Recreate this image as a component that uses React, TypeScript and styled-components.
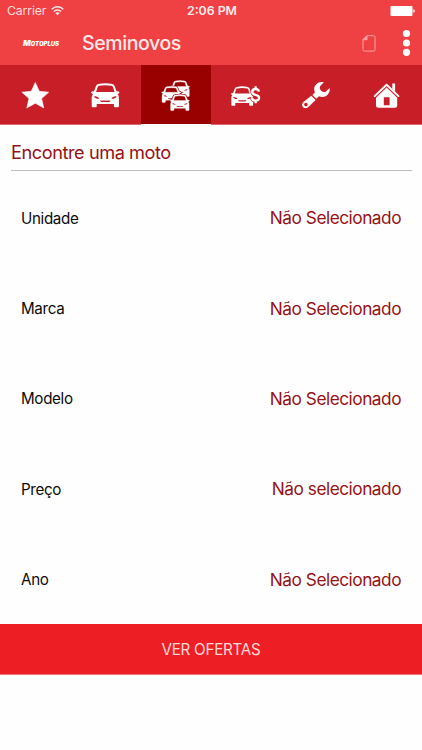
import React from "react";
import styled, { createGlobalStyle } from "styled-components";

const GlobalStyle = createGlobalStyle`
  * { box-sizing: border-box; }
  body { margin: 0; background: #fff; font-family: Inter, "Liberation Sans", sans-serif; }
`;

const Screen = styled.div`
  width: 422px;
  height: 750px;
  background: #fefefe;
  display: flex;
  flex-direction: column;
  overflow: hidden;
`;

const Header = styled.header`
  height: 65px;
  flex: none;
  background: #ef4143;
  color: #fff;
`;

const StatusBar = styled.div`
  height: 22px;
  padding: 0 7px 0 7px;
  display: grid;
  grid-template-columns: 1fr auto 1fr;
  align-items: center;
  font-size: 12.3px;
  line-height: 22px;
`;

const Carrier = styled.div`
  display: flex;
  align-items: center;
  gap: 5px;
  color: #ffdcdc;
  letter-spacing: -0.15px;
`;

const Clock = styled.div`
  font-weight: 600;
  font-size: 12.3px;
  letter-spacing: 0;
  color: #ffeaea;
  padding-left: 2px;
`;

const BatterySlot = styled.div`
  display: flex;
  justify-content: flex-end;
`;

const NavBar = styled.div`
  height: 43px;
  padding: 0 11.5px 1px 23px;
  display: flex;
  align-items: center;
`;

const Logo = styled.div`
  width: 59px;
  font-size: 6px;
  line-height: 8px;
  font-weight: 900;
  font-style: italic;
  letter-spacing: -0.05px;
  white-space: nowrap;
`;

const LogoInitial = styled.span`
  font-size: 8px;
`;

const Title = styled.h1`
  flex: 1;
  margin: 0;
  font-size: 19.5px;
  line-height: 24px;
  font-weight: 500;
  letter-spacing: -0.4px;
  color: #ffe9e9;
`;

const PageIcon = styled.svg`
  margin-right: 26px;
`;

const Tabs = styled.nav`
  height: 60px;
  flex: none;
  display: grid;
  grid-template-columns: repeat(6, 1fr);
  background: #fff;
`;

const Tab = styled.div<{ $active?: boolean }>`
  height: ${(p) => (p.$active ? 58.5 : 60)}px;
  overflow: hidden;
  background: ${(p) => (p.$active ? "#990000" : "#c81e27")};
  border-bottom: ${(p) => (p.$active ? "none" : "1px solid #db6a70")};
  svg { display: block; width: 100%; height: 60px; }
`;

const Heading = styled.h2`
  margin: 0 10px 0 11px;
  height: 46px;
  flex: none;
  padding-top: 15px;
  border-bottom: 1px solid #bdbdbd;
  font-size: 18.2px;
  line-height: 25px;
  font-weight: 400;
  letter-spacing: -0.45px;
  color: #951216;
`;

const Filters = styled.div`
  flex: none;
  height: 453px;
  padding: 2px 21px 0 21px;
`;

const Row = styled.div`
  height: 90.4px;
  display: flex;
  justify-content: space-between;
  align-items: center;
`;

const Label = styled.span`
  font-size: 15.2px;
  line-height: 20px;
  letter-spacing: -0.35px;
  padding-top: 1px;
  color: #0c0c0c;
`;

const Value = styled.span`
  font-size: 17.3px;
  line-height: 22px;
  letter-spacing: -0.5px;
  color: #951216;
`;

const OffersButton = styled.button`
  flex: none;
  width: 100%;
  height: 51px;
  padding: 1px 0 0;
  border: 0;
  border-bottom: 1px solid #f37b7d;
  background: #ee1f24;
  color: #ffdada;
  letter-spacing: -0.25px;
  font: 400 15.2px/49px Inter, "Liberation Sans", sans-serif;
`;

/* Front view of a car on a 28 x 24 grid. */
const Car = () => (
  <path
    fillRule="evenodd"
    d="M7 .8Q14-.9 21 .8Q22.8 1.3 23.5 3.2L25.3 8.2Q28 8 28.2 9.3Q28 10.4 26.2 10.7Q27.6 12 27.6 14V23Q27.6 24 26.6 24H23.6Q22.6 24 22.6 23V20.7H5.4V23Q5.4 24 4.4 24H1.4Q.4 24 .4 23V14Q.4 12 1.8 10.7Q0 10.4-.2 9.3Q0 8 2.7 8.2L4.5 3.2Q5.2 1.3 7 .8ZM7.6 2.6Q6.7 2.8 6.3 4L4.8 8.9H23.2L21.7 4Q21.3 2.8 20.4 2.6Q14 1.4 7.6 2.6ZM2.8 12.8Q3 15.6 7.8 15.6Q7.8 13.6 2.8 12.8ZM25.2 12.8Q25 15.6 20.2 15.6Q20.2 13.6 25.2 12.8ZM8.8 17.3L9.7 18.8H18.3L19.2 17.3Z"
  />
);

/* Solid outline used to separate overlapping cars. */
const carOutline =
  "M7 .8Q14-.9 21 .8Q22.8 1.3 23.5 3.2L25.3 8.2Q28 8 28.2 9.3Q28 10.4 27.6 14V24H.4V14Q0 10.4-.2 9.3Q0 8 2.7 8.2L4.5 3.2Q5.2 1.3 7 .8Z";

const FleetCar = ({ x, y }: { x: number; y: number }) => (
  <g transform={`translate(${x} ${y}) scale(.68 .67)`}>
    <path d={carOutline} fill="#990000" stroke="#990000" strokeWidth="2.4" />
    <g stroke="#fff" strokeWidth=".5"><Car /></g>
  </g>
);

const dollar =
  "M48 26.6C47.6 24.7 46.2 24 44.6 24C42.6 24 41.2 25.2 41.2 26.9C41.2 28.8 42.6 29.4 44.6 29.8C46.8 30.3 48.1 31 48.1 32.8C48.1 34.6 46.6 35.6 44.6 35.6C42.5 35.6 41.1 34.6 40.8 32.8M44.6 21.2V24.2M44.6 35.4V38.2";

const tabs: { name: string; active?: boolean; icon: React.ReactNode }[] = [
  {
    name: "Destaques",
    icon: (
      <path d="M35.3 17.5L39.3 26.3L48.7 27.2L41.6 33.6L43.8 43L35.3 38.2L26.8 43L29 33.6L21.9 27.2L31.3 26.3Z" stroke="#fff" strokeWidth=".6" strokeLinejoin="round" />
    ),
  },
  { name: "Novos", icon: <g transform="translate(21.3 18.2)"><Car /></g> },
  {
    name: "Seminovos",
    active: true,
    icon: (
      <g>
        <FleetCar x={29.5} y={15.5} />
        <FleetCar x={20.8} y={21.3} />
        <FleetCar x={29.3} y={29.5} />
      </g>
    ),
  },
  {
    name: "Financiamento",
    icon: (
      <g>
        <g transform="translate(20 21.3) scale(.8 .81)"><Car /></g>
        <path d={dollar} fill="none" stroke="#c81e27" strokeWidth="3.6" />
        <path d={dollar} fill="none" stroke="#fff" strokeWidth="2.3" />
      </g>
    ),
  },
  {
    name: "Oficina",
    icon: (
      <g>
        <path d="M42.8 17.2C37.8 15.9 33.1 19.6 33.2 24.2Q33.2 26.1 33.9 27.4L31.4 29.9L35.3 33.8L37.9 31.3Q43.9 33.4 47.3 28.7Q49.4 26 48.7 23.1L44.7 26.8Q42.3 27.6 40.3 25.9Q38.2 23.9 38.9 21.4Z" />
        <path
          fillRule="evenodd"
          d="M30.3 30.8L34.6 35.1L28 41.6Q25 44.2 22.3 42.4Q19.8 39.6 22.2 37.2ZM24.9 37.8A1.8 1.8 0 1 0 24.9 41.4A1.8 1.8 0 1 0 24.9 37.8Z"
        />
      </g>
    ),
  },
  {
    name: "Concessionária",
    icon: (
      <g>
        <path d="M22.7 31.1L34.6 19.7L46.5 31.1" fill="none" stroke="#fff" strokeWidth="1.9" strokeLinecap="round" strokeLinejoin="round" />
        <path d="M40.3 18.5H43.1V26.5L40.3 23.9Z" />
        <path
          fillRule="evenodd"
          d="M34.6 22.6L45.2 32.7V40.2Q45.2 42.7 42.6 42.7H26.6Q24 42.7 24 40.2V32.7ZM31.8 32.3V40.3H37.6V32.3Z"
        />
      </g>
    ),
  },
];

const filters = [
  { label: "Unidade", value: "Não Selecionado" },
  { label: "Marca", value: "Não Selecionado" },
  { label: "Modelo", value: "Não Selecionado" },
  { label: "Preço", value: "Não selecionado" },
  { label: "Ano", value: "Não Selecionado" },
];

export default function App() {
  return (
    <>
      <GlobalStyle />
      <Screen>
        <Header>
          <StatusBar>
            <Carrier>
              Carrier
              <svg width="13" height="10" viewBox="0 0 13 10" fill="none" stroke="#ffeaea" strokeWidth="1.5">
                <path d="M.7 3.3Q6.5-1.8 12.3 3.3" />
                <path d="M2.8 5.5Q6.5 2.4 10.2 5.5" />
                <path d="M4.3 6.9Q6.5 5.4 8.7 6.9L6.5 9.2Z" fill="#ffeaea" stroke="none" />
              </svg>
            </Carrier>
            <Clock>2:06 PM</Clock>
            <BatterySlot>
              <svg width="25" height="10" viewBox="0 0 25 10" fill="#fff">
                <rect x=".5" y="0" width="22" height="10" rx="1" />
                <path d="M23.3 3.3Q24.8 3.5 24.8 5Q24.8 6.5 23.3 6.7Z" />
              </svg>
            </BatterySlot>
          </StatusBar>
          <NavBar>
            <Logo><LogoInitial>M</LogoInitial>OTOPLUS</Logo>
            <Title>Seminovos</Title>
            <PageIcon width="14" height="17" viewBox="0 0 14 17" fill="none" stroke="#f9a3a3" strokeWidth="1">
              <path d="M5 .7H11.5Q13 .7 13 2.2V14.6Q13 16.1 11.5 16.1H2.5Q1 16.1 1 14.6V4.7Z" />
              <path d="M5 .7V4.7H1Z" fill="#f9a3a3" />
            </PageIcon>
            <svg width="9" height="28" viewBox="0 0 9 28" fill="#fff">
              <circle cx="4.5" cy="4.5" r="3.6" />
              <circle cx="4.5" cy="14" r="3.6" />
              <circle cx="4.5" cy="23.3" r="3.6" />
            </svg>
          </NavBar>
        </Header>
        <Tabs>
          {tabs.map((t) => (
            <Tab key={t.name} $active={t.active}>
              <svg viewBox="0 0 70.33 60" fill="#fff">{t.icon}</svg>
            </Tab>
          ))}
        </Tabs>
        <Heading>Encontre uma moto</Heading>
        <Filters>
          {filters.map((f) => (
            <Row key={f.label}>
              <Label>{f.label}</Label>
              <Value>{f.value}</Value>
            </Row>
          ))}
        </Filters>
        <OffersButton>VER OFERTAS</OffersButton>
      </Screen>
    </>
  );
}
